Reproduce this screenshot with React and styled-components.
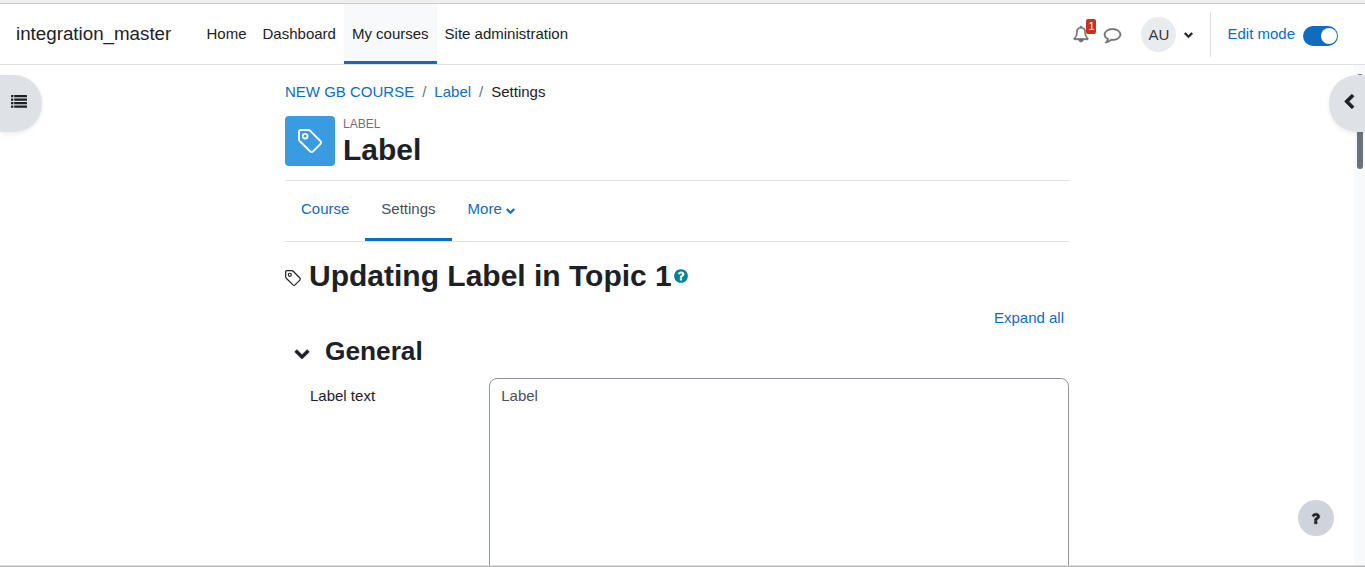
import React, { useState } from "react";
import styled, { createGlobalStyle } from "styled-components";

const CHEVRON_DOWN =
    "M1683 808l-742 741q-19 19-45 19t-45-19l-742-741q-19-19-19-45.5t19-45.5l166-165q19-19 45-19t45 19l531 531 531-531q19-19 45-19t45 19l166 165q19 19 19 45.5t-19 45.5z";
const CHEVRON_LEFT =
    "M1427 301l-531 531 531 531q19 19 19 45t-19 45l-166 166q-19 19-45 19t-45-19l-742-742q-19-19-19-45t19-45l742-742q19-19 45-19t45 19l166 166q19 19 19 45t-19 45z";
const BELL =
    "M912 1696q0-16-16-16-59 0-101.5-42.5t-42.5-101.5q0-16-16-16t-16 16q0 73 51.5 124.5t124.5 51.5q16 0 16-16zm-666-288h1300q-266-300-266-832 0-51-24-105t-69-103-121.5-80.5-169.5-31.5-169.5 31.5-121.5 80.5-69 103-24 105q0 532-266 832zm1482 0q0 52-38 90t-90 38h-448q0 106-75 181t-181 75-181-75-75-181h-448q-52 0-90-38t-38-90q50-42 91-88t85-119.5 74.5-158.5 50-206 19.5-260q0-152 117-282.5t307-158.5q-8-19-8-39 0-40 28-68t68-28 68 28 28 68q0 20-8 39 190 28 307 158.5t117 282.5q0 139 19.5 260t50 206 74.5 158.5 85 119.5 91 88z";
const COMMENT =
    "M896 384q-204 0-381.5 69.5t-282 187.5-104.5 255q0 112 71.5 213.5t201.5 175.5l87 50-27 96q-24 91-70 172 152-63 275-171l43-38 57 6q69 8 130 8 204 0 381.5-69.5t282-187.5 104.5-255-104.5-255-282-187.5-381.5-69.5zm896 512q0 174-120 321.5t-326 233-450 85.5q-70 0-145-8-198 175-460 242-49 14-114 22h-5q-15 0-27-10.5t-16-27.5v-1q-3-4-.5-12t2-10 4.5-9.5l6-9 7-8.5 8-9q7-8 31-34.5t34.5-38 31-39.5 32.5-51 27-59 26-76q-157-89-247.5-220t-90.5-281q0-130 71-248.5t191-204.5 286-136.5 348-50.5 348 50.5 286 136.5 191 204.5 71 248.5z";
const QUESTION =
    "M1088 1256v240q0 16-12 28t-28 12h-240q-16 0-28-12t-12-28v-240q0-16 12-28t28-12h240q16 0 28 12t12 28zm316-600q0 54-15.5 101t-35 76.5-55 59.5-57.5 43.5-61 35.5q-41 23-68.5 65t-27.5 67q0 17-12 32.5t-28 15.5h-240q-15 0-25.5-18.5t-10.5-37.5v-45q0-83 65-156.5t143-108.5q59-27 84-56t25-76q0-42-46.5-74t-107.5-32q-65 0-108 29-35 25-107 115-13 16-31 16-12 0-25-8l-164-125q-13-10-15.5-25t5.5-28q160-266 464-266 80 0 161 31t146 83 106 127.5 41 158.5z";
const QUESTION_CIRCLE =
    "M1024 1376v-192q0-14-9-23t-23-9h-192q-14 0-23 9t-9 23v192q0 14 9 23t23 9h192q14 0 23-9t9-23zm256-672q0-88-55.5-163t-138.5-116-170-41q-243 0-371 213-15 24 8 42l132 100q7 6 19 6 16 0 25-12 53-68 86-92 34-24 86-24 48 0 85.5 26t37.5 59q0 38-20 61t-68 45q-63 28-115.5 86.5t-52.5 125.5v36q0 14 9 23t23 9h192q14 0 23-9t9-23q0-19 21.5-49.5t54.5-49.5q32-18 49-28.5t46-35 44.5-48 28-60.5 12.5-81zm384 192q0 209-103 385.5t-279.5 279.5-385.5 103-385.5-103-279.5-279.5-103-385.5 103-385.5 279.5-279.5 385.5-103 385.5 103 279.5 279.5 103 385.5z";

const Icon = ({ d, size, weight = 0 }) => (
    <Svg
        viewBox="0 0 1792 1792"
        width={size}
        height={size}
        fill="currentColor"
        stroke="currentColor"
        strokeWidth={weight}
    >
        <path d={d} />
    </Svg>
);

const TagIcon = ({ size, stroke }) => (
    <Svg
        viewBox="0 0 24 24"
        width={size}
        height={size}
        fill="none"
        stroke="currentColor"
        strokeWidth={stroke}
        strokeLinejoin="round"
    >
        <path d="M2.6 1h7.6q1.2 0 2.1.9L22.3 12q1.5 1.6 0 3.1l-7.2 7.2q-1.5 1.5-3.1 0L1.9 12.3q-.9-.9-.9-2.1V2.6Q1 1 2.6 1z" />
        <circle cx="7.2" cy="7.2" r="2.3" />
    </Svg>
);

const ListIcon = () => (
    <Svg width="16" height="13" viewBox="0 0 16 13" fill="currentColor">
        {[0, 3.5, 7, 10.5].map((y) => (
            <g key={y}>
                <rect x="0" y={y} width="2.3" height="2.3" rx="0.2" />
                <rect x="3.2" y={y} width="12.8" height="2.3" rx="0.2" />
            </g>
        ))}
    </Svg>
);

const App = () => {
    const [editing, setEditing] = useState(true);
    const [text, setText] = useState("Label");
    return (
        <Page>
            <GlobalStyle />
            <TopEdge />
            <Navbar>
                <Brand>integration_master</Brand>
                <NavItem>Home</NavItem>
                <NavItem>Dashboard</NavItem>
                <NavItem $active>My courses</NavItem>
                <NavItem>Site administration</NavItem>
                <UserNav>
                    <NavIcon>
                        <Icon d={BELL} size={16} weight={60} />
                        <Badge>1</Badge>
                    </NavIcon>
                    <NavIcon>
                        <Icon d={COMMENT} size={17} weight={60} />
                    </NavIcon>
                    <Avatar>AU</Avatar>
                    <Icon d={CHEVRON_DOWN} size={9} weight={120} />
                    <Divider />
                    <EditLabel>Edit mode</EditLabel>
                    <Switch $on={editing} onClick={() => setEditing(!editing)}>
                        <Knob />
                    </Switch>
                </UserNav>
            </Navbar>
            <Body>
                <Scroller>
                    <Main>
                        <Breadcrumb>
                            <Link>NEW GB COURSE</Link>
                            <Slash>/</Slash>
                            <Link>Label</Link>
                            <Slash>/</Slash>
                            <span>Settings</span>
                        </Breadcrumb>
                        <PageHeader>
                            <ActivityIcon>
                                <TagIcon size={24} stroke={1.9} />
                            </ActivityIcon>
                            <div>
                                <ActivityType>LABEL</ActivityType>
                                <ActivityName>Label</ActivityName>
                            </div>
                        </PageHeader>
                        <Tabs>
                            <Tab>Course</Tab>
                            <Tab $active>Settings</Tab>
                            <Tab>
                                More
                                <Icon d={CHEVRON_DOWN} size={9} weight={120} />
                            </Tab>
                        </Tabs>
                        <Heading>
                            <TagIcon size={16} stroke={1.8} />
                            <HeadingText>Updating Label in Topic 1</HeadingText>
                            <Help>
                                <Icon d={QUESTION_CIRCLE} size={16} />
                            </Help>
                        </Heading>
                        <ExpandRow>
                            <Link>Expand all</Link>
                        </ExpandRow>
                        <Section>
                            <Icon d={CHEVRON_DOWN} size={16} weight={60} />
                            <SectionTitle>General</SectionTitle>
                        </Section>
                        <Field>
                            <FieldLabel>Label text</FieldLabel>
                            <TextArea value={text} onChange={(e) => setText(e.target.value)} />
                        </Field>
                    </Main>
                </Scroller>
                <ScrollTrack>
                    <ScrollThumb />
                </ScrollTrack>
                <LeftDrawer>
                    <ListIcon />
                </LeftDrawer>
                <RightDrawer>
                    <Icon d={CHEVRON_LEFT} size={16} weight={60} />
                </RightDrawer>
                <HelpButton>
                    <Icon d={QUESTION} size={15} weight={60} />
                </HelpButton>
            </Body>
            <BottomEdge />
        </Page>
    );
};

export default App;

const GlobalStyle = createGlobalStyle`
    * {
        box-sizing: border-box;
    }
    body {
        margin: 0;
        background: #fff;
        color: #1d2125;
        font-family: "Liberation Sans", Arial, sans-serif;
        font-size: 15px;
        line-height: 1.5;
        overflow: hidden;
    }
`;

const Svg = styled.svg`
    display: block;
    flex: none;
    overflow: visible;
`;

const Page = styled.div`
    display: flex;
    flex-direction: column;
    height: 567px;
    overflow: hidden;
`;

const TopEdge = styled.div`
    flex: none;
    height: 4px;
    background: #efefef;
    border-bottom: 1px solid #cacaca;
`;

const BottomEdge = styled.div`
    flex: none;
    height: 2px;
    background: #b8b8b8;
    border-top: 1px solid #dadada;
`;

const Navbar = styled.nav`
    flex: none;
    display: flex;
    height: 61px;
    padding: 0 27px 0 16px;
    border-bottom: 1px solid #dee2e6;
`;

const Brand = styled.div`
    width: 182.5px;
    font-size: 18.75px;
    line-height: 60px;
`;

const NavItem = styled.a`
    padding: 0 8px;
    line-height: 60px;
    background: ${(p) => (p.$active ? "#f8f9fa" : "transparent")};
    box-shadow: ${(p) => (p.$active ? "inset 0 -3px #0f6cbf" : "none")};
`;

const UserNav = styled.div`
    display: flex;
    align-items: center;
    margin-left: auto;
`;

const NavIcon = styled.div`
    position: relative;
    margin-right: 15px;
    color: #6a6a6a;
`;

const Badge = styled.span`
    position: absolute;
    top: -7px;
    left: 13px;
    width: 10px;
    height: 15px;
    border-radius: 2px;
    background: #ca3120;
    color: #fff;
    font-size: 11px;
    line-height: 15px;
    text-align: center;
`;

const Avatar = styled.div`
    width: 35px;
    height: 35px;
    margin: 0 8px 0 5px;
    border-radius: 50%;
    background: #e9ecef;
    color: #343a40;
    line-height: 35px;
    text-align: center;
`;

const Divider = styled.div`
    width: 1px;
    height: 45px;
    margin: 0 16px 0 17px;
    background: #dee2e6;
`;

const EditLabel = styled.label`
    color: #0f6cbf;
`;

const Switch = styled.button`
    display: flex;
    justify-content: ${(p) => (p.$on ? "flex-end" : "flex-start")};
    width: 35px;
    height: 20px;
    margin: 4px 0 0 8px;
    padding: 2px 1.5px;
    border: 0;
    border-radius: 10px;
    background: ${(p) => (p.$on ? "#0f6cbf" : "#8f959e")};
`;

const Knob = styled.span`
    width: 16px;
    height: 16px;
    border-radius: 50%;
    background: #fff;
`;

const Body = styled.div`
    position: relative;
    flex: 1;
    display: flex;
    min-height: 0;
`;

const Scroller = styled.div`
    flex: 1;
    overflow: hidden;
`;

const ScrollTrack = styled.div`
    width: 11px;
    padding: 9px 2px 0 3px;
    background: #f8f9fa;
`;

const ScrollThumb = styled.div`
    height: 95px;
    border-radius: 3px;
    background: #6a737b;
`;

const Main = styled.main`
    width: 784px;
    margin: 0 auto;
    padding-top: 16px;
`;

const Link = styled.a`
    color: #0f6cbf;
`;

const Breadcrumb = styled.div`
    display: flex;
    height: 23px;
`;

const Slash = styled.span`
    padding: 0 8px;
    color: #6a737b;
`;

const PageHeader = styled.header`
    display: flex;
    gap: 8px;
    margin-top: 12px;
    height: 64px;
`;

const ActivityIcon = styled.div`
    display: flex;
    align-items: center;
    justify-content: center;
    width: 50px;
    height: 50px;
    border-radius: 4px;
    background: #399be2;
    color: #fff;
`;

const ActivityType = styled.div`
    color: #6a737b;
    font-size: 12px;
    line-height: 16px;
`;

const ActivityName = styled.h1`
    margin: 0;
    font-size: 30px;
    line-height: 36px;
`;

const Tabs = styled.div`
    display: flex;
    height: 62px;
    border-top: 1px solid #dee2e6;
    border-bottom: 1px solid #dee2e6;
`;

const Tab = styled.a`
    display: flex;
    align-items: center;
    gap: 4px;
    padding: 0 16px 4px;
    color: ${(p) => (p.$active ? "#495057" : "#0f6cbf")};
    box-shadow: ${(p) => (p.$active ? "inset 0 -3px #0f6cbf" : "none")};

    svg {
        margin-top: 2px;
    }
`;

const Heading = styled.h2`
    display: flex;
    align-items: center;
    height: 36px;
    margin: 16px 0 0;
    font-size: 30px;

    & > svg {
        margin-top: 3px;
    }
`;

const HeadingText = styled.span`
    margin: 0 1px 0 8px;
    line-height: 36px;
`;

const Help = styled.span`
    color: #008196;
`;

const ExpandRow = styled.div`
    margin-top: 12px;
    padding-right: 5px;
    line-height: 23px;
    text-align: right;
`;

const Section = styled.div`
    display: flex;
    align-items: center;
    gap: 15px;
    margin-top: 6px;
    padding-left: 9px;

    svg {
        margin-top: 3px;
    }
`;

const SectionTitle = styled.h3`
    margin: 0;
    font-size: 26.25px;
    line-height: 32px;
`;

const Field = styled.div`
    display: flex;
    margin-top: 11px;
`;

const FieldLabel = styled.label`
    width: 204px;
    padding: 7px 0 0 25px;
`;

const TextArea = styled.textarea`
    flex: 1;
    height: 344px;
    padding: 6px 11.25px;
    border: 1px solid #8f959e;
    border-radius: 8px;
    color: #495057;
    font: inherit;
    resize: none;
    outline: none;
`;

const LeftDrawer = styled.button`
    position: absolute;
    top: 10px;
    left: 0;
    display: flex;
    width: 42px;
    height: 57px;
    padding: 20px 0 0 11px;
    border: 0;
    border-radius: 0 28px 28px 0;
    background: #dee2e6;
    color: #1d2125;
    box-shadow: 0 2px 4px rgba(0, 0, 0, 0.08);
`;

const RightDrawer = styled(LeftDrawer)`
    left: auto;
    right: 0;
    width: 36px;
    padding: 19px 0 0 12px;
    border-radius: 28px 0 0 28px;
`;

const HelpButton = styled.button`
    position: absolute;
    right: 31px;
    bottom: 29px;
    display: flex;
    align-items: center;
    justify-content: center;
    width: 36px;
    height: 36px;
    padding: 0 1px 0 0;
    border: 0;
    border-radius: 50%;
    background: #ced4da;
    color: #1d2125;
`;
